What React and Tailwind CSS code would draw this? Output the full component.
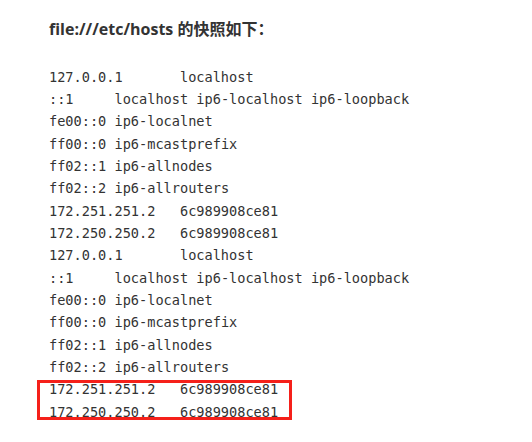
import React from 'react';

const lines = [
  '127.0.0.1\tlocalhost',
  '::1\tlocalhost ip6-localhost ip6-loopback',
  'fe00::0\tip6-localnet',
  'ff00::0\tip6-mcastprefix',
  'ff02::1\tip6-allnodes',
  'ff02::2\tip6-allrouters',
  '172.251.251.2\t6c989908ce81',
  '172.250.250.2\t6c989908ce81',
  '127.0.0.1\tlocalhost',
  '::1\tlocalhost ip6-localhost ip6-loopback',
  'fe00::0\tip6-localnet',
  'ff00::0\tip6-mcastprefix',
  'ff02::1\tip6-allnodes',
  'ff02::2\tip6-allrouters',
];

const marked = ['172.251.251.2\t6c989908ce81', '172.250.250.2\t6c989908ce81'];

const Line = ({ text }) => <div className="h-[22.35px]">{text}</div>;

export default function App() {
  return (
    <div className="w-[532px] h-[442px] bg-white pl-[49px] pt-[17px] text-[#333]">
      <h2 className="text-[16px] leading-[24px] font-bold font-['Open_Sans','Noto_Sans_CJK_SC',sans-serif]">
        file:///etc/hosts 的快照如下：
      </h2>
      <pre className="mt-[24.5px] text-[13.6px] leading-[22.35px] font-['DejaVu_Sans_Mono',monospace] whitespace-pre [tab-size:8]">
        {lines.map((l, i) => (
          <Line key={i} text={l} />
        ))}
        <div className="relative">
          {marked.map((l, i) => (
            <Line key={i} text={l} />
          ))}
          <div className="absolute -left-[12px] top-[2px] w-[255px] h-[40px] border-[3px] border-[#f5201a]" />
        </div>
      </pre>
    </div>
  );
}
